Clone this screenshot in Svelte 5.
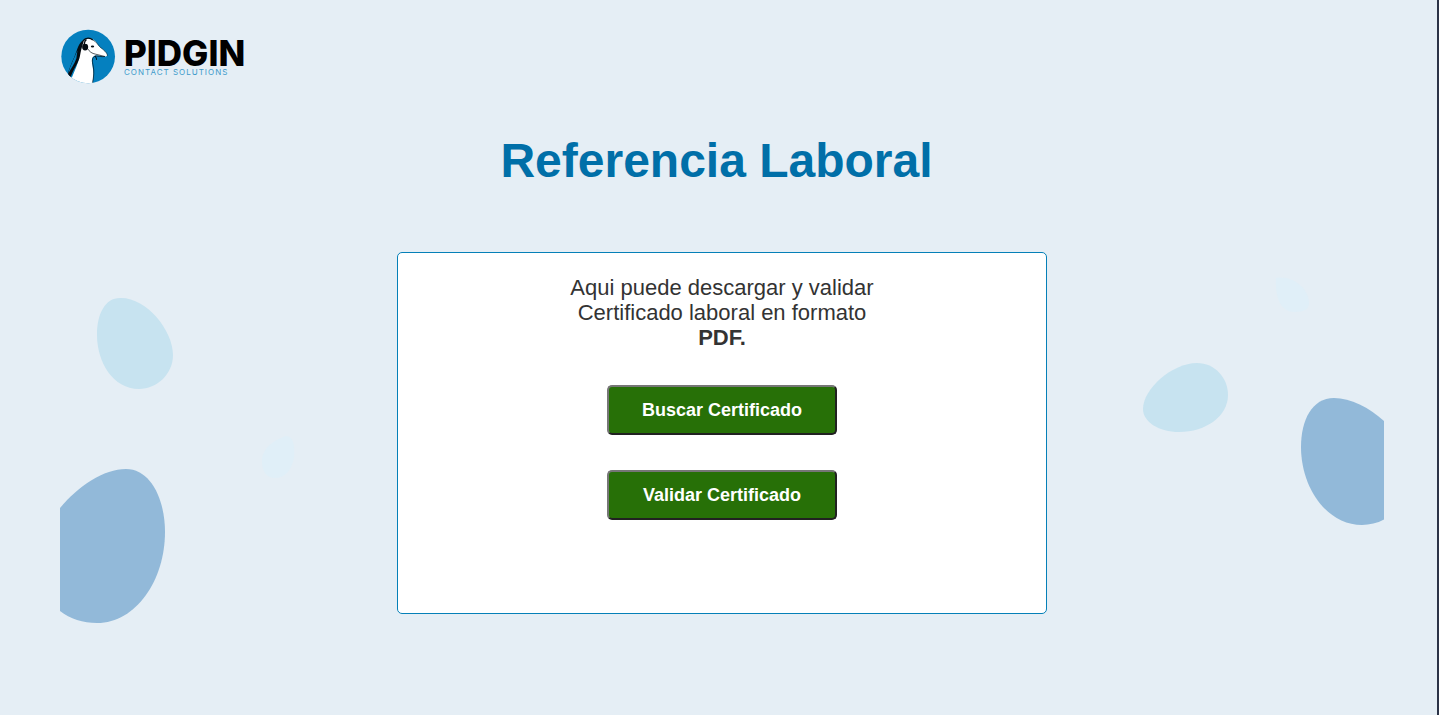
<script>
  const actions = ['Buscar Certificado', 'Validar Certificado'];
</script>

<div class="page">
  <header>
    <svg class="mark" viewBox="20 22 164 164" aria-hidden="true">
      <defs>
        <clipPath id="disc"><circle cx="101" cy="104" r="80" /></clipPath>
      </defs>
      <circle cx="101" cy="104" r="80" fill="#0580bf" />
      <g clip-path="url(#disc)">
        <path d="M84 61C91 49 108 48 118 55C126 60 130 71 139 79C148 85 157 93 158 100C156 106 147 104 137 102C128 99 118 98 113 109C110 119 115 133 116 147C117 163 115 174 114 190H45C51 164 65 142 72 117C76 101 76 78 84 61Z" fill="#fff" />
        <path d="M89 54C77 60 72 72 67 86C58 112 45 135 38 162L46 176C52 148 68 130 75 109C78 96 79 86 83 74Z" fill="#050c12" />
        <path d="M69 86C58 112 46 134 41 157C48 142 60 128 66 109Z" fill="#0580bf" />
        <path d="M86 57C94 46 108 48 115 55M96 53C90 58 88 66 90 76" fill="none" stroke="#050c12" stroke-width="4" />
        <ellipse cx="92" cy="76" rx="9" ry="10" fill="#050c12" />
        <path d="M99 80C105 90 112 95 123 97L151 104C140 106 128 101 121 103C111 108 113 119 116 132C119 148 118 163 114 182" fill="none" stroke="#050c12" stroke-width="2" />
        <path d="M115 55C126 59 131 72 140 79C151 87 160 96 158 103" fill="none" stroke="#172a35" stroke-width="2" />
        <path d="M121 102C124 106 127 109 126 114" fill="none" stroke="#050c12" stroke-width="3" />
        <ellipse cx="114" cy="74" rx="5" ry="3" fill="#050c12" />
      </g>
    </svg>
    <div class="brand">
      <span class="name">PIDGIN</span>
      <span class="tag">CONTACT SOLUTIONS</span>
    </div>
  </header>

  <h1>Referencia Laboral</h1>

  <div class="stage">
    <svg class="art" viewBox="60 252 337 380" aria-hidden="true">
      <path class="light" d="M120 298C146 297 173 330 173 355C173 374 157 389 139 389C113 389 97 362 97 335C97 314 105 298 120 298Z" />
      <path class="pale" d="M286 436C293 436 295 445 294 457C292 470 285 478 275 478C267 478 262 472 262 461C262 448 274 440 286 436Z" />
      <path class="deep" d="M60 508C78 486 104 469 126 469C151 469 165 500 165 532C165 580 136 623 97 623C83 623 70 619 60 611Z" />
    </svg>
    <main>
      <p>Aqui puede descargar y validar Certificado laboral en formato <strong>PDF.</strong></p>
      {#each actions as action}
        <button type="button">{action}</button>
      {/each}
    </main>
    <svg class="art right" viewBox="1047 252 337 380" aria-hidden="true">
      <path class="pale" d="M1276 278C1293 275 1309 289 1309 303C1309 309 1304 312 1295 312C1281 312 1275 299 1276 278Z" />
      <path class="light" d="M1197 363C1215 363 1228 378 1228 395C1228 416 1206 432 1179 432C1159 432 1143 422 1143 409C1143 389 1172 363 1197 363Z" />
      <path class="deep" d="M1334 398C1351 398 1370 408 1385 422V519C1378 523 1370 525 1362 525C1327 525 1301 488 1301 447C1301 420 1312 398 1334 398Z" />
    </svg>
  </div>
</div>

<style>
  :global(body) {
    background: #e5eef5;
  }

  .page {
    box-sizing: border-box;
    min-height: 100vh;
    border-right: 2px solid #2b3347;
    background: #e5eef5;
    font-family: "Liberation Sans", Arial, sans-serif;
    color: #333;
  }

  header {
    display: flex;
    align-items: center;
    gap: 8px;
    padding: 29px 61px 0;
  }

  .mark {
    width: 55px;
    height: 55px;
  }

  .brand {
    display: flex;
    flex-direction: column;
  }

  .name {
    font: 800 35px/30px Inter, sans-serif;
    color: #000;
  }

  .tag {
    font: 400 8px/8px Inter, sans-serif;
    letter-spacing: 1px;
    color: #3c9acb;
  }

  h1 {
    margin: 49px 0 0;
    padding-right: 4px;
    font-size: 48px;
    line-height: 56px;
    text-align: center;
    color: #006fa8;
  }

  .stage {
    display: grid;
    grid-template-columns: 1fr minmax(0, 650px) 1fr;
    align-items: start;
    padding: 63px 53px 0 60px;
  }

  .art {
    width: 100%;
    max-width: 337px;
  }

  .right {
    justify-self: end;
  }

  .light {
    fill: #c7e3f0;
  }

  .pale {
    fill: #e0eff8;
  }

  .deep {
    fill: #92b9d9;
  }

  main {
    box-sizing: border-box;
    display: flex;
    flex-direction: column;
    align-items: center;
    gap: 35px;
    min-height: 362px;
    padding: 22px 24px;
    border: 1px solid #0580b8;
    border-radius: 5px;
    background: #fff;
  }

  p {
    max-width: 325px;
    margin: 0;
    font-size: 22px;
    line-height: 25px;
    text-align: center;
  }

  button {
    width: 230px;
    height: 50px;
    padding: 0;
    border: 2px solid;
    border-color: #767676 #212121 #212121 #767676;
    border-radius: 5px;
    background: #277007;
    color: #fff;
    font: 700 18px/20px "Liberation Sans", Arial, sans-serif;
  }
</style>
